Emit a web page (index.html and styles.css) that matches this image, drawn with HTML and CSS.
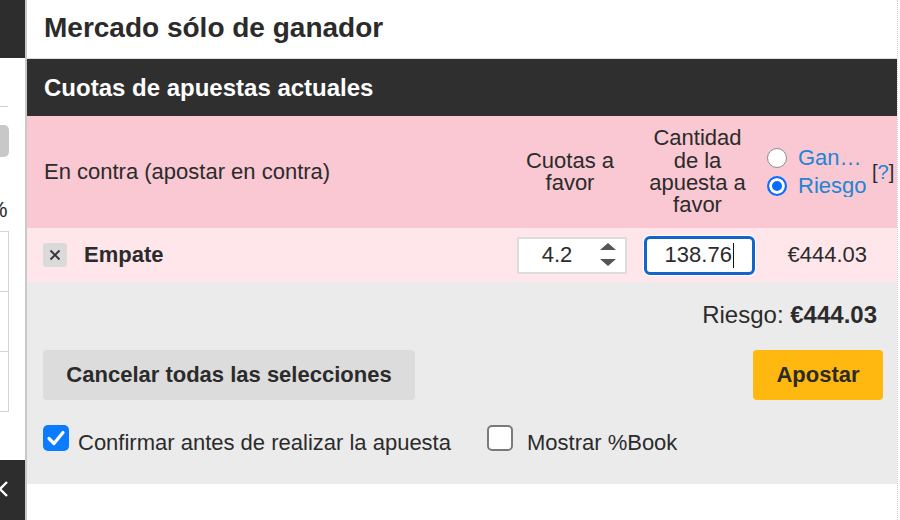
FILE: index.html
```html
<!DOCTYPE html>
<html lang="es">
<head>
<meta charset="utf-8">
<title>Mercado sólo de ganador</title>
<link rel="stylesheet" href="styles.css">
</head>
<body>
<div class="page">
  <aside class="side">
    <div class="side-top"></div>
    <div class="side-rule"></div>
    <div class="side-btn"></div>
    <div class="side-pct">%</div>
    <div class="side-table">
      <div class="side-row"></div>
      <div class="side-row"></div>
      <div class="side-row"></div>
    </div>
    <div class="side-foot">
      <svg class="chev" width="12" height="18" viewBox="0 0 12 18"><polyline points="10,2 3,9 10,16" fill="none" stroke="#fff" stroke-width="2.4"/></svg>
    </div>
  </aside>

  <main class="slip">
    <h1 class="slip-title">Mercado sólo de ganador</h1>
    <h2 class="slip-head">Cuotas de apuestas actuales</h2>

    <div class="cols">
      <div class="c-side">En contra (apostar en contra)</div>
      <div class="c-odds">Cuotas a<br>favor</div>
      <div class="c-stake">Cantidad<br>de la<br>apuesta a<br>favor</div>
      <div class="c-mode">
        <label class="radio"><span class="dot"></span><span class="lbl">Ganancia</span></label>
        <label class="radio on"><span class="dot"></span><span class="lbl">Riesgo</span></label>
      </div>
      <div class="c-help">[<span class="q">?</span>]</div>
    </div>

    <div class="bet">
      <div class="bet-sel">
        <button class="remove" type="button">
          <svg width="12" height="12" viewBox="0 0 12 12"><path d="M1.5 1.5 L10.5 10.5 M10.5 1.5 L1.5 10.5" stroke="#333" stroke-width="1.8"/></svg>
        </button>
        <b class="runner">Empate</b>
      </div>
      <div class="bet-odds">
        <div class="field odds">
          <span class="val">4.2</span>
          <svg class="spin" width="20" height="26" viewBox="0 0 20 26"><path d="M2 8 L10 1 L18 8 Z M2 17 L18 17 L10 24 Z" fill="#555"/></svg>
        </div>
      </div>
      <div class="bet-stake">
        <div class="field stake"><span class="val">138.76</span><span class="caret"></span></div>
      </div>
      <div class="bet-liab">€444.03</div>
    </div>

    <div class="foot">
      <div class="total">Riesgo: <b>€444.03</b></div>
      <div class="actions">
        <button class="btn cancel" type="button">Cancelar todas las selecciones</button>
        <button class="btn place" type="button">Apostar</button>
      </div>
      <div class="opts">
        <label class="check confirm">
          <span class="box on"><svg width="26" height="26" viewBox="0 0 26 26"><polyline points="6,13.5 11,18.5 20,7.5" fill="none" stroke="#fff" stroke-width="3.2" stroke-linecap="round" stroke-linejoin="round"/></svg></span>
          <span>Confirmar antes de realizar la apuesta</span>
        </label>
        <label class="check book">
          <span class="box off"></span>
          <span>Mostrar %Book</span>
        </label>
      </div>
    </div>
  </main>
</div>
</body>
</html>
```

FILE: styles.css
```css
body {
  margin: 0;
  background: #fff;
  color: #2b2b2b;
  font-family: "Liberation Sans", Arial, sans-serif;
}

.page {
  display: flex;
  width: 900px;
  height: 520px;
  overflow: hidden;
}

/* collapsed neighbouring panel on the left */
.side {
  width: 25px;
  flex: none;
  display: flex;
  flex-direction: column;
  border-right: 2px solid #c9c9c9;
  overflow: hidden;
}
.side-top {
  height: 58px;
  background: #2d2d2d;
}
.side-rule {
  margin-top: 48px;
  width: 8px;
  height: 1px;
  background: #d0d0d0;
}
.side-btn {
  margin-top: 18px;
  width: 9px;
  height: 32px;
  background: #c8c8c8;
  border-radius: 0 5px 5px 0;
}
.side-pct {
  margin-top: 42px;
  margin-left: -12px;
  font-size: 22px;
  line-height: 22px;
  white-space: nowrap;
}
.side-table {
  margin-top: 10px;
  margin-left: -10px;
  width: 17px;
  height: 179px;
  border: 1px solid #d4d4d4;
}
.side-row {
  height: 59px;
  border-bottom: 1px solid #d4d4d4;
}
.side-row:last-child {
  border-bottom: 0;
}
.side-foot {
  margin-top: auto;
  height: 60px;
  background: #2d2d2d;
}
.chev {
  display: block;
  margin: 20px 0 0 -3px;
}

/* bet slip */
.slip {
  width: 870px;
  flex: none;
  border-right: 1px dotted #d0d0d0;
}
.slip-title {
  margin: 0;
  height: 59px;
  box-sizing: border-box;
  padding-left: 17px;
  border-bottom: 1px solid #dcdcdc;
  font-size: 28px;
  font-weight: bold;
  line-height: 56px;
}
.slip-head {
  margin: 0;
  height: 57px;
  padding-left: 17px;
  background: #2f2f2f;
  color: #fff;
  font-size: 24px;
  font-weight: bold;
  line-height: 57px;
}

.cols,
.bet {
  display: grid;
  grid-template-columns: 1fr 130px 125px 110px 27px;
  padding-left: 17px;
  align-items: center;
  font-size: 22px;
}

.cols {
  height: 112px;
  background: #f9c8d2;
  line-height: 22.4px;
}
.c-odds,
.c-stake {
  text-align: center;
}
.c-mode {
  display: flex;
  flex-direction: column;
  gap: 6px;
  padding-left: 7px;
}
.radio {
  display: flex;
  align-items: center;
  gap: 11px;
  color: #2385d2;
  line-height: 22px;
}
.dot {
  flex: none;
  width: 20px;
  height: 20px;
  box-sizing: border-box;
  border-radius: 50%;
  border: 1px solid #8c8c8c;
  background: #fff;
}
.radio.on .dot {
  border: 2px solid #0a6cff;
  background: #0a6cff;
  box-shadow: inset 0 0 0 3px #fff;
}
.lbl {
  max-width: 70px;
  overflow: hidden;
  white-space: nowrap;
  text-overflow: ellipsis;
}
.c-help {
  padding-left: 2px;
  font-size: 20px;
  white-space: nowrap;
}
.q {
  color: #2385d2;
}

.bet {
  height: 54px;
  background: #fee6eb;
}
.bet-sel {
  display: flex;
  align-items: center;
  gap: 17px;
  margin-left: -1px;
}
.remove {
  width: 24px;
  height: 24px;
  padding: 0;
  border: 0;
  border-radius: 3px;
  background: #dadada;
  display: grid;
  place-items: center;
}
.remove svg {
  display: block;
}
.runner {
  font-weight: bold;
}
.field {
  display: flex;
  align-items: center;
  box-sizing: border-box;
  background: #fff;
}
.odds {
  width: 110px;
  height: 37px;
  margin-left: 12px;
  border: 2px solid #dcdcdc;
}
.odds .val {
  width: 76px;
  text-align: center;
}
.spin {
  display: block;
  margin-left: 3px;
}
.stake {
  width: 111px;
  height: 39px;
  margin-left: 9px;
  justify-content: center;
  border: 3px solid #1464cc;
  border-radius: 6px;
  box-shadow: 0 0 0 1px #fff;
}
.caret {
  width: 1.5px;
  height: 25px;
  margin-left: 1px;
  background: #111;
}
.bet-liab {
  text-align: right;
  padding-right: 3px;
}

.foot {
  padding: 20px 14px 33px 16px;
  background: #ebebeb;
  font-size: 22px;
}
.total {
  text-align: right;
  font-size: 24px;
  line-height: 26px;
  padding-right: 6px;
}
.actions {
  display: flex;
  justify-content: space-between;
  margin-top: 22px;
}
.btn {
  height: 50px;
  padding: 0;
  border: 0;
  border-radius: 4px;
  color: #2b2b2b;
  font-family: "Liberation Sans", Arial, sans-serif;
  font-size: 22px;
  font-weight: bold;
}
.cancel {
  width: 372px;
  background: #dcdcdc;
}
.place {
  width: 130px;
  background: #ffb80f;
}
.opts {
  display: flex;
  align-items: center;
  margin-top: 25px;
  height: 26px;
}
.check {
  display: flex;
  align-items: center;
  line-height: 26px;
}
.check span:last-child {
  position: relative;
  top: 5px;
}
.confirm {
  gap: 9px;
}
.book {
  gap: 14px;
  margin-left: 36px;
}
.box {
  flex: none;
  width: 26px;
  height: 26px;
  box-sizing: border-box;
  border-radius: 5px;
}
.box svg {
  display: block;
}
.box.on {
  background: #0b7bff;
}
.box.off {
  border: 2px solid #7a7a7a;
  background: #fff;
}
```
